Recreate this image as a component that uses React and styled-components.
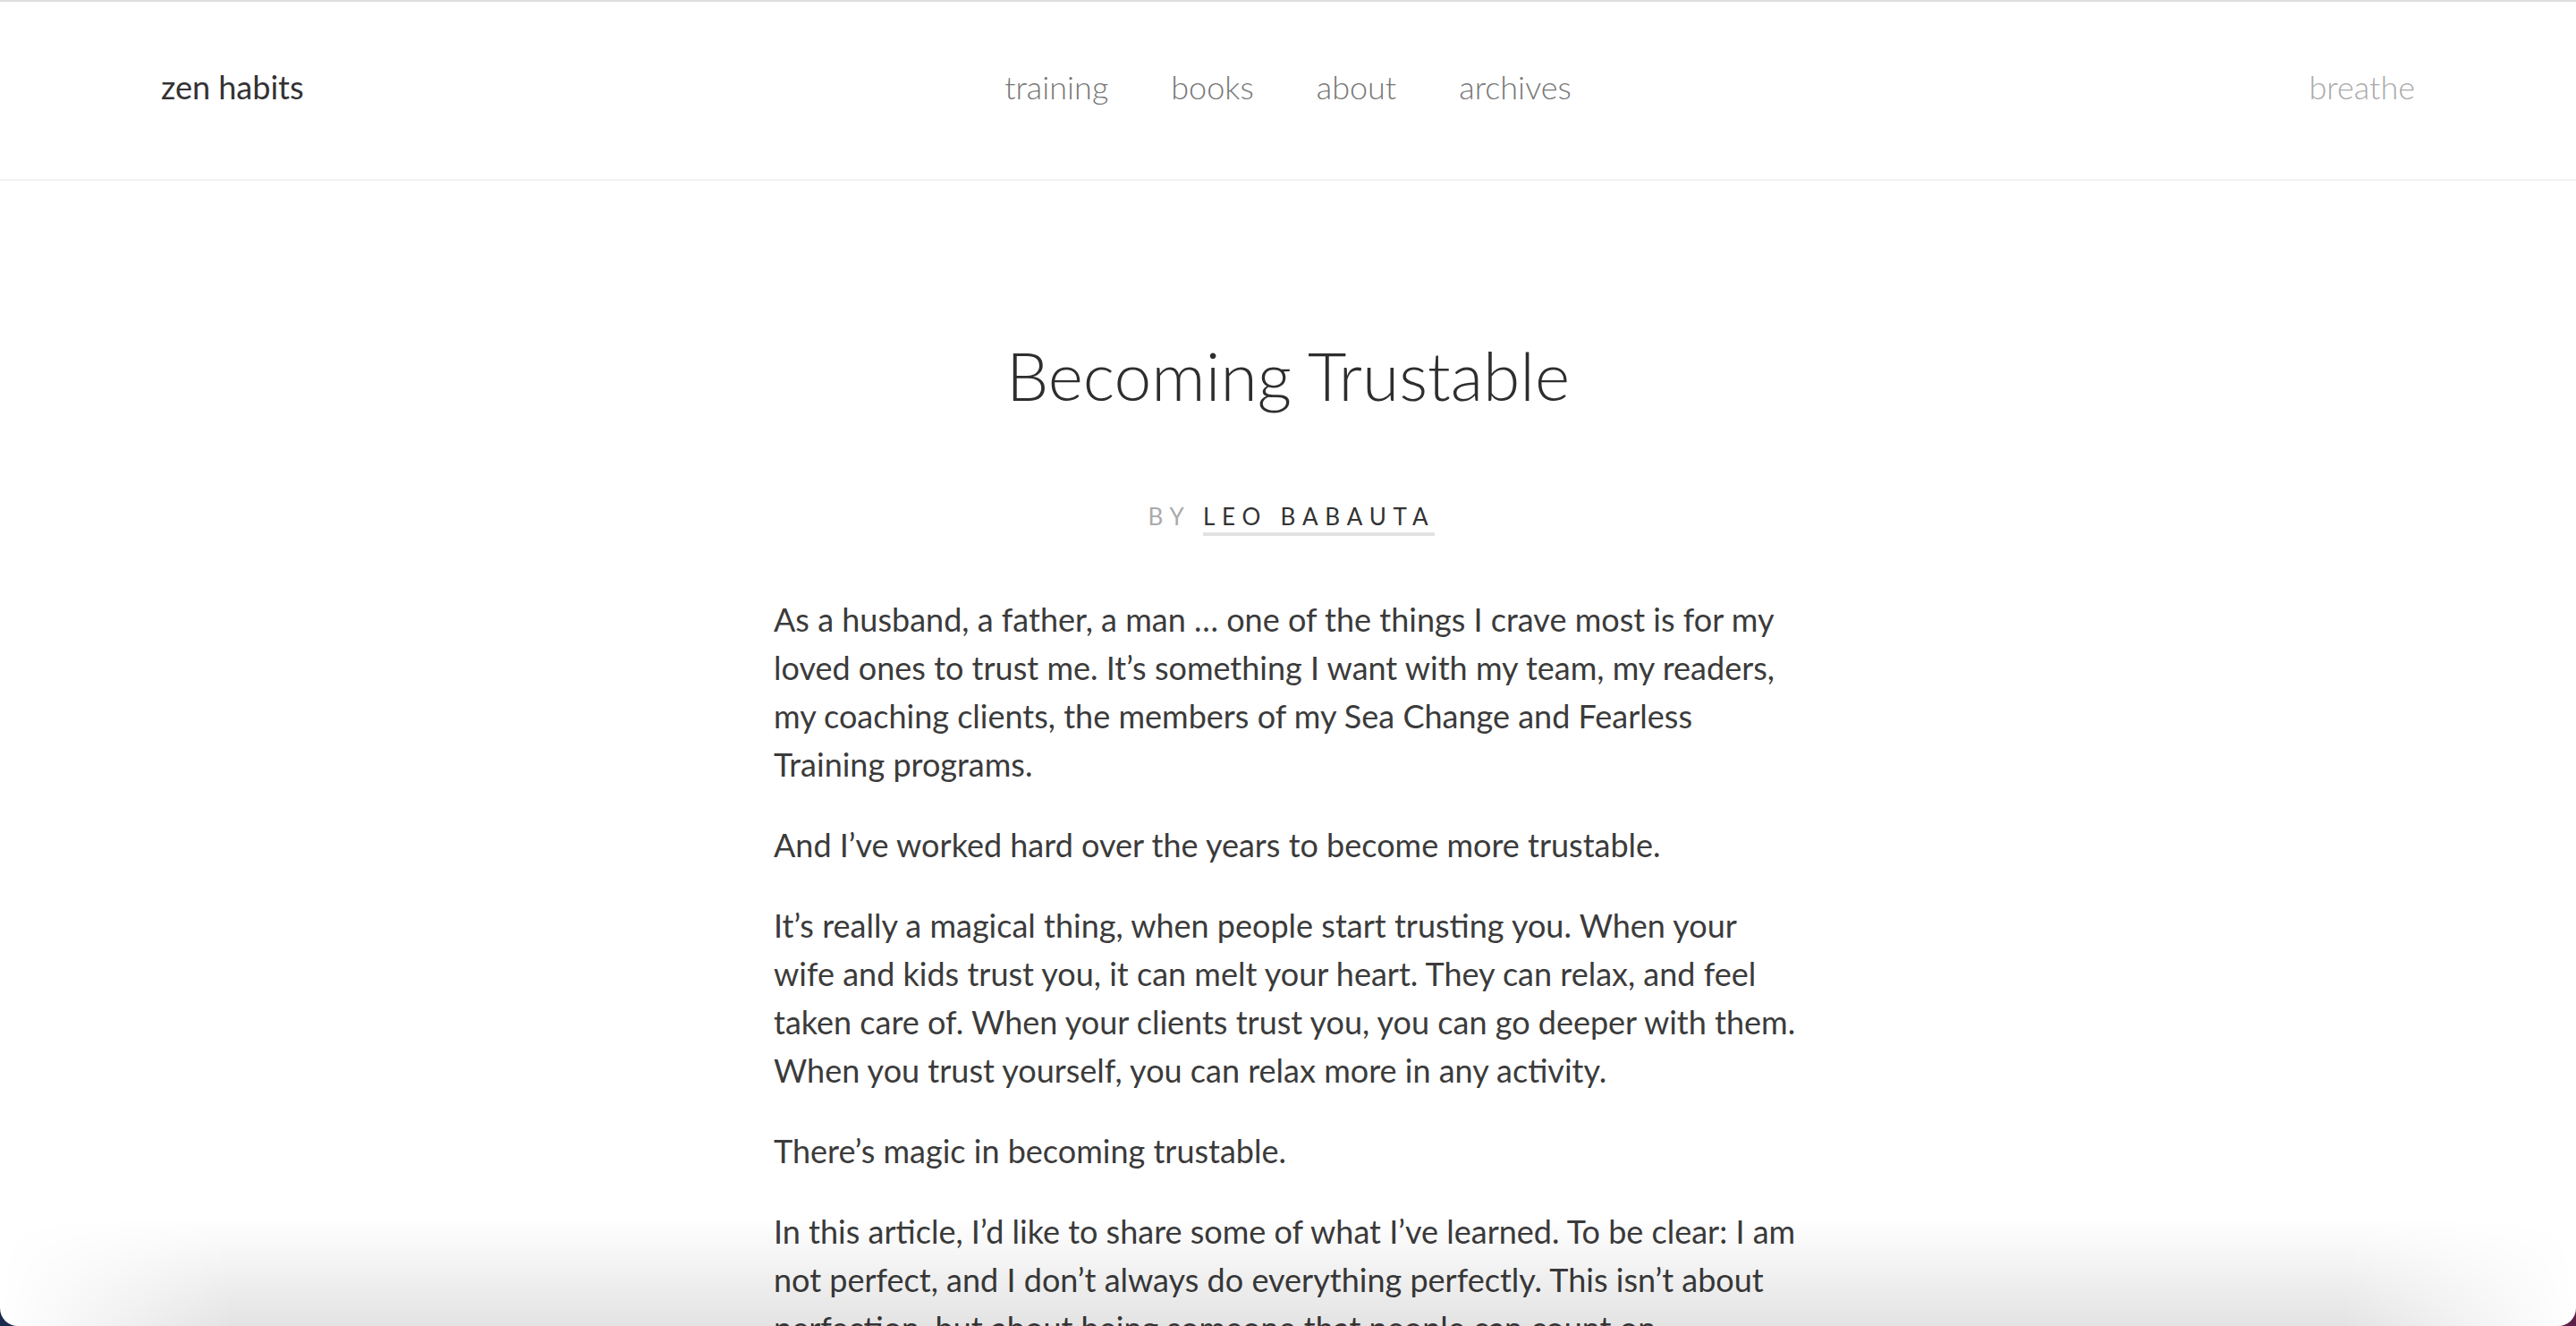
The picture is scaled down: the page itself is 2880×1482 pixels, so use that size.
import React from 'react';
import styled, { createGlobalStyle } from 'styled-components';

const GlobalStyle = createGlobalStyle`
  html, body {
    margin: 0;
    height: 100%;
  }
  body {
    background: linear-gradient(90deg, #1a2a4c 0%, #3a2548 50%, #5c2146 100%);
    font-family: Lato, "Open Sans", sans-serif;
    overflow: hidden;
  }
`;

const Window = styled.div`
  position: relative;
  height: 1482px;
  box-sizing: border-box;
  background: #fff;
  border-top: 2px solid #dedede;
  border-radius: 0 0 20px 20px;
  overflow: hidden;
`;

const Header = styled.header`
  height: 200px;
  box-sizing: border-box;
  padding: 0 180px 8px;
  display: grid;
  grid-template-columns: 1fr auto 1fr;
  align-items: center;
  border-bottom: 2px solid #f2f2f2;
  font-size: 36px;
  font-weight: 300;
`;

const Logo = styled.a`
  color: #333;
  font-weight: 400;
  text-decoration: none;
`;

const Nav = styled.nav`
  display: flex;
  gap: 70px;
`;

const NavLink = styled.a`
  color: ${p => (p.$faint ? '#aaa' : '#777')};
  text-decoration: none;
  justify-self: ${p => (p.$end ? 'end' : 'auto')};
`;

const Article = styled.article`
  width: 1150px;
  margin: 0 auto;
  color: #333;
`;

const Title = styled.h1`
  margin: 172px 0 0;
  font-size: 75px;
  line-height: 1.2;
  font-weight: 300;
  text-align: center;
  color: #2e2e2e;
`;

const Byline = styled.div`
  margin-top: 94px;
  text-align: center;
  font-size: 26px;
  line-height: 39px;
  letter-spacing: 0.3em;
  text-transform: uppercase;
  color: #aaa;
`;

const Author = styled.a`
  color: #333;
  text-decoration: none;
  border-bottom: 4px solid #e2e2e2;
  padding-bottom: 2px;
  margin-right: -0.3em;
`;

const Body = styled.div`
  margin-top: 68px;
  font-size: 36px;
  line-height: 54px;
  font-weight: 400;
  color: #3b3b3b;

  p {
    margin: 0 0 36px;
  }
`;

const BottomShade = styled.div`
  position: absolute;
  left: 0;
  right: 0;
  bottom: 0;
  height: 120px;
  pointer-events: none;
  background: linear-gradient(to bottom, rgba(0, 0, 0, 0), rgba(0, 0, 0, 0.11));
  -webkit-mask-image: linear-gradient(to right, transparent 0, #000 260px, #000 calc(100% - 260px), transparent 100%);
  mask-image: linear-gradient(to right, transparent 0, #000 260px, #000 calc(100% - 260px), transparent 100%);
`;

const paragraphs = [
  'As a husband, a father, a man … one of the things I crave most is for my loved ones to trust me. It’s something I want with my team, my readers, my coaching clients, the members of my Sea Change and Fearless Training programs.',
  'And I’ve worked hard over the years to become more trustable.',
  'It’s really a magical thing, when people start trusting you. When your wife and kids trust you, it can melt your heart. They can relax, and feel taken care of. When your clients trust you, you can go deeper with them. When you trust yourself, you can relax more in any activity.',
  'There’s magic in becoming trustable.',
  'In this article, I’d like to share some of what I’ve learned. To be clear: I am not perfect, and I don’t always do everything perfectly. This isn’t about perfection, but about being someone that people can count on.',
];

export default function App() {
  return (
    <>
      <GlobalStyle />
      <Window>
        <Header>
          <Logo href="#">zen habits</Logo>
          <Nav>
            <NavLink href="#">training</NavLink>
            <NavLink href="#">books</NavLink>
            <NavLink href="#">about</NavLink>
            <NavLink href="#">archives</NavLink>
          </Nav>
          <NavLink href="#" $faint $end>breathe</NavLink>
        </Header>
        <Article>
          <Title>Becoming Trustable</Title>
          <Byline>
            By <Author href="#">Leo Babauta</Author>
          </Byline>
          <Body>
            {paragraphs.map((t, i) => (
              <p key={i}>{t}</p>
            ))}
          </Body>
        </Article>
        <BottomShade />
      </Window>
    </>
  );
}
